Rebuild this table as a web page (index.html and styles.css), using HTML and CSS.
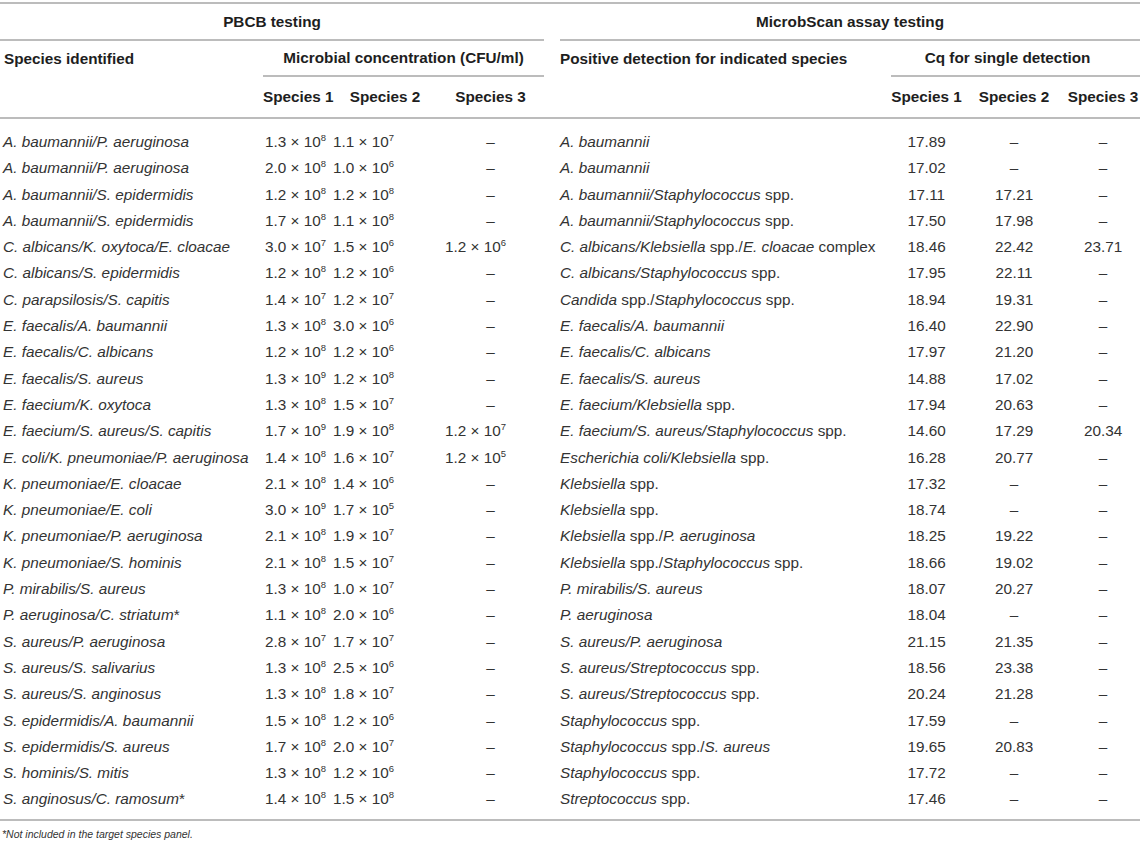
FILE: index.html
```html
<!DOCTYPE html>
<html lang="en">
<head>
  <meta charset="UTF-8" />
  <meta name="viewport" content="width=device-width, initial-scale=1.0"/>
  <title>PBCB and MicrobScan testing</title>
  <link rel="stylesheet" href="styles.css">
</head>
<body>

  <table class="tabela">
    <colgroup>
      <col class="c-nome">
      <col class="c-sp1">
      <col class="c-sp2">
      <col class="c-sp3">
      <col class="c-vao">
      <col class="c-det">
      <col class="c-cq1">
      <col class="c-cq2">
      <col class="c-cq3">
    </colgroup>
    <thead>
      <tr class="h1">
        <th colspan="4" class="linha">PBCB testing</th>
        <th></th>
        <th colspan="4" class="linha">MicrobScan assay testing</th>
      </tr>
      <tr class="h2">
        <th class="esq">Species identified</th>
        <th colspan="3" class="linha">Microbial concentration (CFU/ml)</th>
        <th></th>
        <th class="esq det">Positive detection for indicated species</th>
        <th colspan="3" class="linha cq">Cq for single detection</th>
      </tr>
      <tr class="h3">
        <th></th>
        <th>Species 1</th>
        <th>Species 2</th>
        <th>Species 3</th>
        <th></th>
        <th></th>
        <th>Species 1</th>
        <th>Species 2</th>
        <th>Species 3</th>
      </tr>
    </thead>
    <tbody>
      <tr>
        <td class="nome"><i>A. baumannii/P. aeruginosa</i></td>
        <td class="v1">1.3 × 10<sup>8</sup></td><td class="v2">1.1 × 10<sup>7</sup></td><td class="na">–</td><td></td>
        <td class="det"><i>A. baumannii</i></td>
        <td class="cq">17.89</td><td class="cq">–</td><td class="cq">–</td>
      </tr>
      <tr>
        <td class="nome"><i>A. baumannii/P. aeruginosa</i></td>
        <td class="v1">2.0 × 10<sup>8</sup></td><td class="v2">1.0 × 10<sup>6</sup></td><td class="na">–</td><td></td>
        <td class="det"><i>A. baumannii</i></td>
        <td class="cq">17.02</td><td class="cq">–</td><td class="cq">–</td>
      </tr>
      <tr>
        <td class="nome"><i>A. baumannii/S. epidermidis</i></td>
        <td class="v1">1.2 × 10<sup>8</sup></td><td class="v2">1.2 × 10<sup>8</sup></td><td class="na">–</td><td></td>
        <td class="det"><i>A. baumannii/Staphylococcus</i> spp.</td>
        <td class="cq">17.11</td><td class="cq">17.21</td><td class="cq">–</td>
      </tr>
      <tr>
        <td class="nome"><i>A. baumannii/S. epidermidis</i></td>
        <td class="v1">1.7 × 10<sup>8</sup></td><td class="v2">1.1 × 10<sup>8</sup></td><td class="na">–</td><td></td>
        <td class="det"><i>A. baumannii/Staphylococcus</i> spp.</td>
        <td class="cq">17.50</td><td class="cq">17.98</td><td class="cq">–</td>
      </tr>
      <tr>
        <td class="nome"><i>C. albicans/K. oxytoca/E. cloacae</i></td>
        <td class="v1">3.0 × 10<sup>7</sup></td><td class="v2">1.5 × 10<sup>6</sup></td><td class="v3">1.2 × 10<sup>6</sup></td><td></td>
        <td class="det"><i>C. albicans/Klebsiella</i> spp./<i>E. cloacae</i> complex</td>
        <td class="cq">18.46</td><td class="cq">22.42</td><td class="cq">23.71</td>
      </tr>
      <tr>
        <td class="nome"><i>C. albicans/S. epidermidis</i></td>
        <td class="v1">1.2 × 10<sup>8</sup></td><td class="v2">1.2 × 10<sup>6</sup></td><td class="na">–</td><td></td>
        <td class="det"><i>C. albicans/Staphylococcus</i> spp.</td>
        <td class="cq">17.95</td><td class="cq">22.11</td><td class="cq">–</td>
      </tr>
      <tr>
        <td class="nome"><i>C. parapsilosis/S. capitis</i></td>
        <td class="v1">1.4 × 10<sup>7</sup></td><td class="v2">1.2 × 10<sup>7</sup></td><td class="na">–</td><td></td>
        <td class="det"><i>Candida</i> spp./<i>Staphylococcus</i> spp.</td>
        <td class="cq">18.94</td><td class="cq">19.31</td><td class="cq">–</td>
      </tr>
      <tr>
        <td class="nome"><i>E. faecalis/A. baumannii</i></td>
        <td class="v1">1.3 × 10<sup>8</sup></td><td class="v2">3.0 × 10<sup>6</sup></td><td class="na">–</td><td></td>
        <td class="det"><i>E. faecalis/A. baumannii</i></td>
        <td class="cq">16.40</td><td class="cq">22.90</td><td class="cq">–</td>
      </tr>
      <tr>
        <td class="nome"><i>E. faecalis/C. albicans</i></td>
        <td class="v1">1.2 × 10<sup>8</sup></td><td class="v2">1.2 × 10<sup>6</sup></td><td class="na">–</td><td></td>
        <td class="det"><i>E. faecalis/C. albicans</i></td>
        <td class="cq">17.97</td><td class="cq">21.20</td><td class="cq">–</td>
      </tr>
      <tr>
        <td class="nome"><i>E. faecalis/S. aureus</i></td>
        <td class="v1">1.3 × 10<sup>9</sup></td><td class="v2">1.2 × 10<sup>8</sup></td><td class="na">–</td><td></td>
        <td class="det"><i>E. faecalis/S. aureus</i></td>
        <td class="cq">14.88</td><td class="cq">17.02</td><td class="cq">–</td>
      </tr>
      <tr>
        <td class="nome"><i>E. faecium/K. oxytoca</i></td>
        <td class="v1">1.3 × 10<sup>8</sup></td><td class="v2">1.5 × 10<sup>7</sup></td><td class="na">–</td><td></td>
        <td class="det"><i>E. faecium/Klebsiella</i> spp.</td>
        <td class="cq">17.94</td><td class="cq">20.63</td><td class="cq">–</td>
      </tr>
      <tr>
        <td class="nome"><i>E. faecium/S. aureus/S. capitis</i></td>
        <td class="v1">1.7 × 10<sup>9</sup></td><td class="v2">1.9 × 10<sup>8</sup></td><td class="v3">1.2 × 10<sup>7</sup></td><td></td>
        <td class="det"><i>E. faecium/S. aureus/Staphylococcus</i> spp.</td>
        <td class="cq">14.60</td><td class="cq">17.29</td><td class="cq">20.34</td>
      </tr>
      <tr>
        <td class="nome"><i>E. coli/K. pneumoniae/P. aeruginosa</i></td>
        <td class="v1">1.4 × 10<sup>8</sup></td><td class="v2">1.6 × 10<sup>7</sup></td><td class="v3">1.2 × 10<sup>5</sup></td><td></td>
        <td class="det"><i>Escherichia coli/Klebsiella</i> spp.</td>
        <td class="cq">16.28</td><td class="cq">20.77</td><td class="cq">–</td>
      </tr>
      <tr>
        <td class="nome"><i>K. pneumoniae/E. cloacae</i></td>
        <td class="v1">2.1 × 10<sup>8</sup></td><td class="v2">1.4 × 10<sup>6</sup></td><td class="na">–</td><td></td>
        <td class="det"><i>Klebsiella</i> spp.</td>
        <td class="cq">17.32</td><td class="cq">–</td><td class="cq">–</td>
      </tr>
      <tr>
        <td class="nome"><i>K. pneumoniae/E. coli</i></td>
        <td class="v1">3.0 × 10<sup>9</sup></td><td class="v2">1.7 × 10<sup>5</sup></td><td class="na">–</td><td></td>
        <td class="det"><i>Klebsiella</i> spp.</td>
        <td class="cq">18.74</td><td class="cq">–</td><td class="cq">–</td>
      </tr>
      <tr>
        <td class="nome"><i>K. pneumoniae/P. aeruginosa</i></td>
        <td class="v1">2.1 × 10<sup>8</sup></td><td class="v2">1.9 × 10<sup>7</sup></td><td class="na">–</td><td></td>
        <td class="det"><i>Klebsiella</i> spp./<i>P. aeruginosa</i></td>
        <td class="cq">18.25</td><td class="cq">19.22</td><td class="cq">–</td>
      </tr>
      <tr>
        <td class="nome"><i>K. pneumoniae/S. hominis</i></td>
        <td class="v1">2.1 × 10<sup>8</sup></td><td class="v2">1.5 × 10<sup>7</sup></td><td class="na">–</td><td></td>
        <td class="det"><i>Klebsiella</i> spp./<i>Staphylococcus</i> spp.</td>
        <td class="cq">18.66</td><td class="cq">19.02</td><td class="cq">–</td>
      </tr>
      <tr>
        <td class="nome"><i>P. mirabilis/S. aureus</i></td>
        <td class="v1">1.3 × 10<sup>8</sup></td><td class="v2">1.0 × 10<sup>7</sup></td><td class="na">–</td><td></td>
        <td class="det"><i>P. mirabilis/S. aureus</i></td>
        <td class="cq">18.07</td><td class="cq">20.27</td><td class="cq">–</td>
      </tr>
      <tr>
        <td class="nome"><i>P. aeruginosa/C. striatum</i>*</td>
        <td class="v1">1.1 × 10<sup>8</sup></td><td class="v2">2.0 × 10<sup>6</sup></td><td class="na">–</td><td></td>
        <td class="det"><i>P. aeruginosa</i></td>
        <td class="cq">18.04</td><td class="cq">–</td><td class="cq">–</td>
      </tr>
      <tr>
        <td class="nome"><i>S. aureus/P. aeruginosa</i></td>
        <td class="v1">2.8 × 10<sup>7</sup></td><td class="v2">1.7 × 10<sup>7</sup></td><td class="na">–</td><td></td>
        <td class="det"><i>S. aureus/P. aeruginosa</i></td>
        <td class="cq">21.15</td><td class="cq">21.35</td><td class="cq">–</td>
      </tr>
      <tr>
        <td class="nome"><i>S. aureus/S. salivarius</i></td>
        <td class="v1">1.3 × 10<sup>8</sup></td><td class="v2">2.5 × 10<sup>6</sup></td><td class="na">–</td><td></td>
        <td class="det"><i>S. aureus/Streptococcus</i> spp.</td>
        <td class="cq">18.56</td><td class="cq">23.38</td><td class="cq">–</td>
      </tr>
      <tr>
        <td class="nome"><i>S. aureus/S. anginosus</i></td>
        <td class="v1">1.3 × 10<sup>8</sup></td><td class="v2">1.8 × 10<sup>7</sup></td><td class="na">–</td><td></td>
        <td class="det"><i>S. aureus/Streptococcus</i> spp.</td>
        <td class="cq">20.24</td><td class="cq">21.28</td><td class="cq">–</td>
      </tr>
      <tr>
        <td class="nome"><i>S. epidermidis/A. baumannii</i></td>
        <td class="v1">1.5 × 10<sup>8</sup></td><td class="v2">1.2 × 10<sup>6</sup></td><td class="na">–</td><td></td>
        <td class="det"><i>Staphylococcus</i> spp.</td>
        <td class="cq">17.59</td><td class="cq">–</td><td class="cq">–</td>
      </tr>
      <tr>
        <td class="nome"><i>S. epidermidis/S. aureus</i></td>
        <td class="v1">1.7 × 10<sup>8</sup></td><td class="v2">2.0 × 10<sup>7</sup></td><td class="na">–</td><td></td>
        <td class="det"><i>Staphylococcus</i> spp./<i>S. aureus</i></td>
        <td class="cq">19.65</td><td class="cq">20.83</td><td class="cq">–</td>
      </tr>
      <tr>
        <td class="nome"><i>S. hominis/S. mitis</i></td>
        <td class="v1">1.3 × 10<sup>8</sup></td><td class="v2">1.2 × 10<sup>6</sup></td><td class="na">–</td><td></td>
        <td class="det"><i>Staphylococcus</i> spp.</td>
        <td class="cq">17.72</td><td class="cq">–</td><td class="cq">–</td>
      </tr>
      <tr>
        <td class="nome"><i>S. anginosus/C. ramosum</i>*</td>
        <td class="v1">1.4 × 10<sup>8</sup></td><td class="v2">1.5 × 10<sup>8</sup></td><td class="na">–</td><td></td>
        <td class="det"><i>Streptococcus</i> spp.</td>
        <td class="cq">17.46</td><td class="cq">–</td><td class="cq">–</td>
      </tr>
    </tbody>
  </table>

  <p class="nota">*Not included in the target species panel.</p>

</body>
</html>
```

FILE: styles.css
```css
body {
  margin: 0;
  padding-top: 2px;
  background: #fff;
  color: #333;
  font-family: 'Liberation Sans', Arial, sans-serif;
}

.tabela {
  width: 1140px;
  table-layout: fixed;
  border-collapse: separate;
  border-spacing: 0;
  font-size: 15.3px;
}

.c-nome { width: 263px; }
.c-sp1 { width: 70px; }
.c-sp2 { width: 104px; }
.c-sp3 { width: 107px; }
.c-vao { width: 16px; }
.c-det { width: 331px; }
.c-cq1 { width: 71px; }
.c-cq2 { width: 104px; }
.c-cq3 { width: 74px; }

th {
  padding: 0;
  font-weight: bold;
  color: #1e1e1e;
  text-align: center;
  white-space: nowrap;
}

.h1 th {
  height: 35px;
  border-top: 2px solid #bcbcbc;
}

.h1 th.linha,
.h2 th.linha {
  border-bottom: 2px solid #bcbcbc;
}

.h2 th {
  height: 34px;
}

.h3 th {
  height: 40px;
  border-bottom: 2px solid #bcbcbc;
}

th.esq {
  text-align: left;
  padding-left: 4px;
}

th.det {
  padding-left: 0;
}

th.cq {
  padding-right: 16px;
}

td {
  padding: 0;
  line-height: 26.3px;
  white-space: nowrap;
}

tbody tr:first-child td {
  padding-top: 10px;
}

tbody tr:last-child td {
  padding-bottom: 6px;
  border-bottom: 2px solid #bcbcbc;
}

.nome {
  padding-left: 3px;
}

.v1 { padding-left: 2px; }
.v3 { padding-left: 8px; }

.na,
.cq {
  text-align: center;
}

sup {
  font-size: 0.62em;
  line-height: 0;
  vertical-align: 6px;
}

.nota {
  margin: 7px 0 0 2px;
  font-size: 10.5px;
  font-style: italic;
  color: #333;
}
```
